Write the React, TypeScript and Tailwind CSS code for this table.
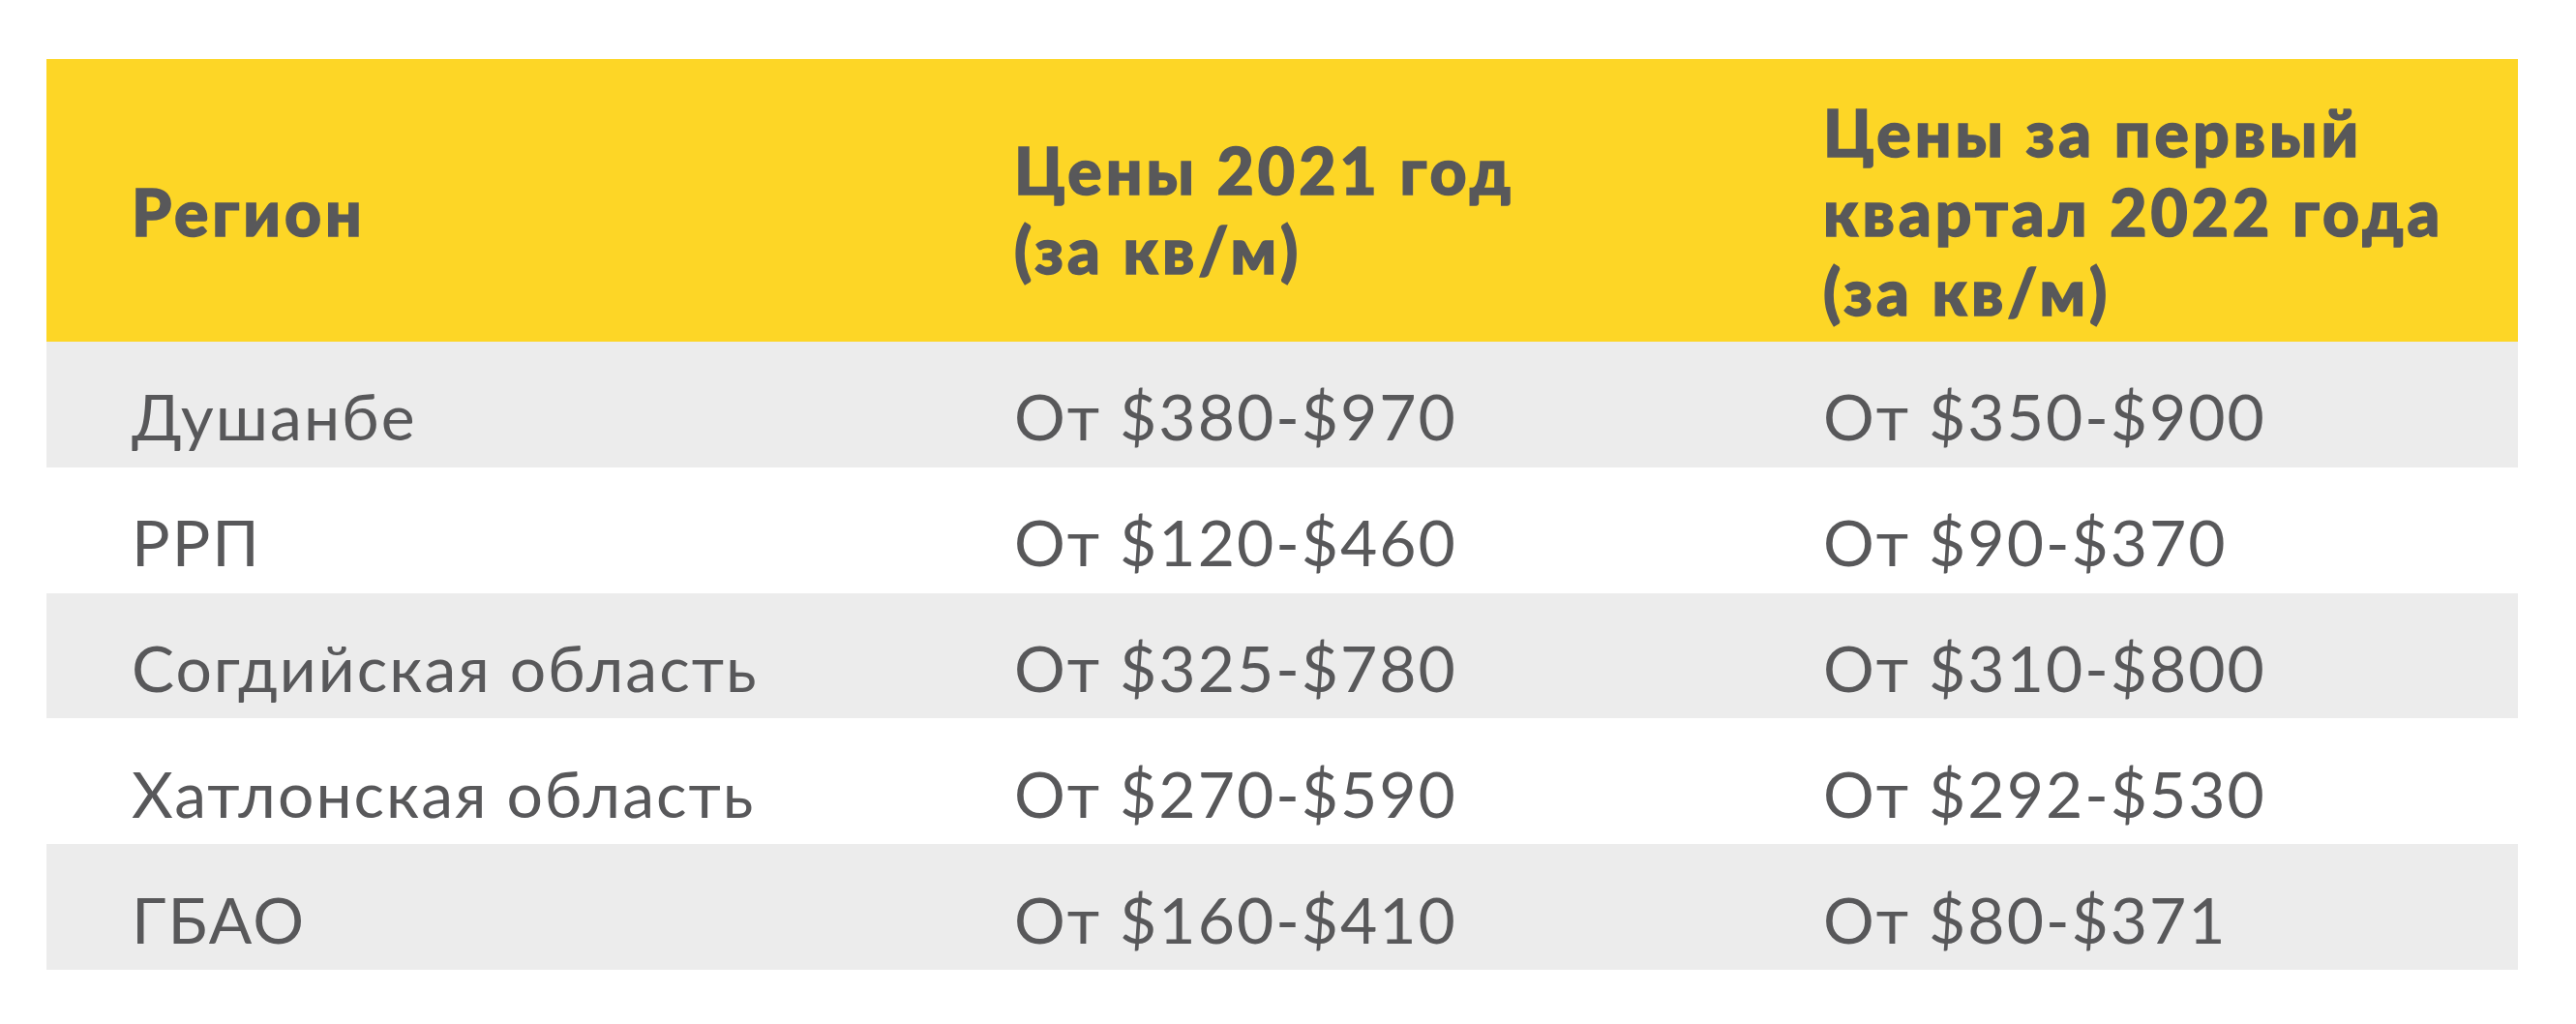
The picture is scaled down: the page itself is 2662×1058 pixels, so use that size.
const rows = [
  ["Душанбе", "От $380-$970", "От $350-$900"],
  ["РРП", "От $120-$460", "От $90-$370"],
  ["Согдийская область", "От $325-$780", "От $310-$800"],
  ["Хатлонская область", "От $270-$590", "От $292-$530"],
  ["ГБАО", "От $160-$410", "От $80-$371"],
];

export default function App() {
  return (
    <div className="w-[2662px] h-[1058px] bg-white pt-[61px] pl-[48px] font-['Lato','Noto_Sans',sans-serif] text-[#58585a]">
      <div className="w-[2554px]">
        {/* Header */}
        <div className="grid grid-cols-[912px_836px_1fr] h-[292px] bg-[#fdd626] font-black text-[66px] leading-[82px] tracking-[4px] [-webkit-text-stroke:1.5px_#58585a]">
          <div className="flex items-center pl-[88px] pt-[24px]">Регион</div>
          <div className="flex items-center pl-[88px] pt-[20px]">
            Цены 2021 год
            <br />
            (за кв/м)
          </div>
          <div className="flex items-center pl-[88px] pt-[24px]">
            Цены за первый
            <br />
            квартал 2022 года
            <br />
            (за кв/м)
          </div>
        </div>

        {/* Rows */}
        {rows.map((row, i) => (
          <div
            key={row[0]}
            className={`grid grid-cols-[912px_836px_1fr] h-[129.8px] text-[66px] tracking-[2px] ${
              i % 2 === 0 ? "bg-[#ececec]" : "bg-white"
            }`}
          >
            {row.map((cell, j) => (
              <div key={j} className="flex items-center pl-[88px] pt-[24px]">
                {cell}
              </div>
            ))}
          </div>
        ))}
      </div>
    </div>
  );
}
